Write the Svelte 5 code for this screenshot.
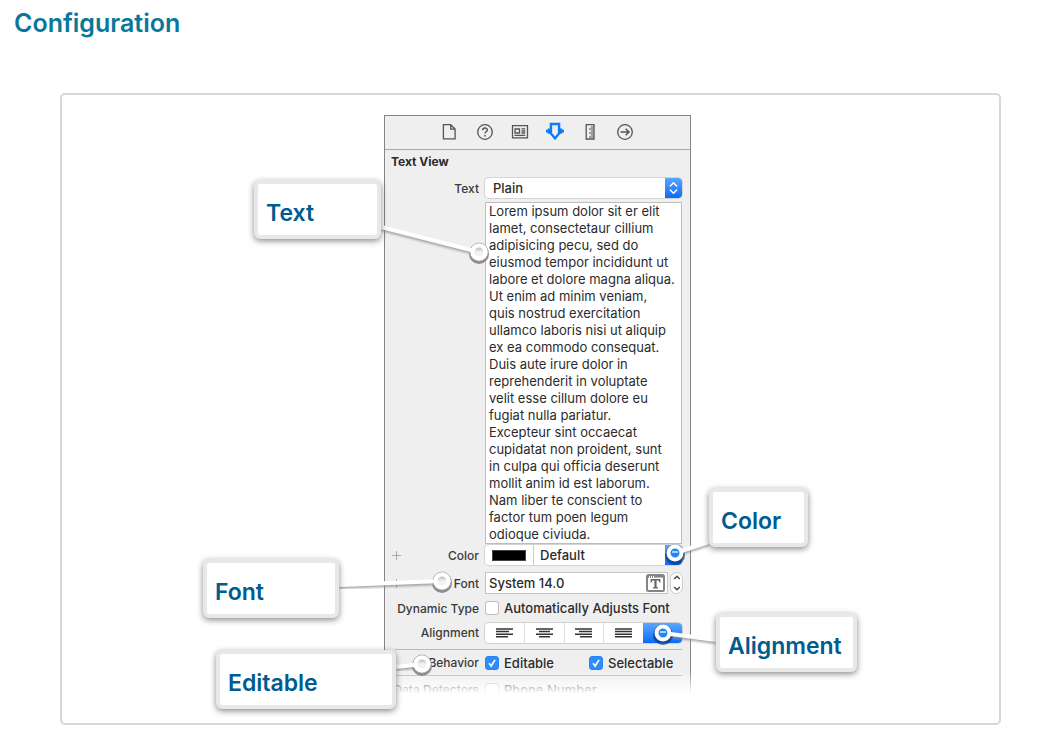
<script>
  const body = [
    'Lorem ipsum dolor sit er elit', 'lamet, consectetaur cillium', 'adipisicing pecu, sed do',
    'eiusmod tempor incididunt ut', 'labore et dolore magna aliqua.', 'Ut enim ad minim veniam,',
    'quis nostrud exercitation', 'ullamco laboris nisi ut aliquip', 'ex ea commodo consequat.',
    'Duis aute irure dolor in', 'reprehenderit in voluptate', 'velit esse cillum dolore eu',
    'fugiat nulla pariatur.', 'Excepteur sint occaecat', 'cupidatat non proident, sunt',
    'in culpa qui officia deserunt', 'mollit anim id est laborum.', 'Nam liber te conscient to',
    'factor tum poen legum', 'odioque civiuda.'
  ].join('\n');

  // Callouts share the coordinates of the stage; each line runs from its card to its pin.
  const callouts = [
    { id: 'text', label: 'Text', x: 51, y: 65, w: 127, from: [178, 112], pin: [276, 137], dark: false },
    { id: 'font', label: 'Font', x: 0, y: 444, w: 136, from: [136, 470], pin: [239, 466], dark: false },
    { id: 'editable', label: 'Editable', x: 13, y: 535, w: 180, from: [193, 552], pin: [219, 549], dark: false },
    { id: 'color', label: 'Color', x: 506, y: 373, w: 99, from: [506, 427], pin: [472, 438], dark: true },
    { id: 'alignment', label: 'Alignment', x: 513, y: 498, w: 141, from: [513, 525], pin: [460, 518], dark: true }
  ];

  const aligns = [
    { name: 'Left', rows: [[0, 17], [0, 13], [0, 17], [0, 12]] },
    { name: 'Center', rows: [[0, 17], [3, 14], [0, 17], [3, 14]] },
    { name: 'Right', rows: [[0, 17], [4, 17], [0, 17], [5, 17]] },
    { name: 'Justified', rows: [[0, 17], [0, 17], [0, 17], [0, 17]] }
  ];
</script>

<main>
  <h2>Configuration</h2>
  <figure>
    <div class="stage">
      <section class="panel" aria-label="Attributes inspector">
        <nav>
          <button aria-label="File"><svg width="18" height="18" viewBox="0 0 18 18"><path d="M2.4 1.7H9.7L14.1 6.1V15.9H2.4ZM9.7 1.7V6.1H14.1" /></svg></button>
          <button aria-label="Help"><svg width="18" height="18" viewBox="0 0 18 18"><circle cx="9" cy="9" r="7.3" /><path class="thick" d="M6.7 7.2C6.7 4.3 11.3 4.3 11.3 7.1C11.3 8.8 9 8.7 9 10.5M9 12V13.6" /></svg></button>
          <button aria-label="Identity"><svg width="18" height="18" viewBox="0 0 18 18"><path d="M1.5 2.7H16.5V14.8H1.5ZM4 6H8.5V10H4ZM10.5 5.8H14.2M10.5 8H14.2M10.5 10H14.2M3.5 12.4H14.2" /></svg></button>
          <button aria-label="Attributes" class="on"><svg width="20" height="20" viewBox="0 0 20 20"><path d="M5.9 2H14.1V11.4L10 16.4L5.9 11.4Z" /><path class="fill" d="M2.8 6.5H6V11.8H2.8V10.5H1V7.8H2.8ZM17.2 6.5H14V11.8H17.2V10.5H19V7.8H17.2Z" /></svg></button>
          <button aria-label="Size"><svg width="18" height="18" viewBox="0 0 18 18"><path d="M5.2 1.7H13V16H5.2Z" /><path class="thin" d="M12.6 4H9.8M12.6 6H8M12.6 8H9.8M12.6 10H8M12.6 12H9.8M12.6 14H8" /></svg></button>
          <button aria-label="Connections"><svg width="18" height="18" viewBox="0 0 18 18"><circle cx="9" cy="9" r="7.3" /><path class="thick" d="M4.5 9H13M9.7 5.8L13 9L9.7 12.2" /></svg></button>
        </nav>

        <h3>Text View</h3>

        <div class="row text">
          <label class="name" for="kind">Text</label>
          <div class="popup">
            <select id="kind"><option>Plain</option></select>
            <span class="cap"><svg width="17" height="20" viewBox="0 0 17 20"><path d="M5.3 8L8.5 4.8L11.7 8M5.3 12L8.5 15.2L11.7 12" /></svg></span>
          </div>
        </div>

        <div class="row area">
          <textarea aria-label="Text content" rows="20" spellcheck="false" value={body}></textarea>
        </div>

        <div class="row color">
          <button class="plus" aria-label="Add color variation"></button>
          <label class="name" for="color">Color</label>
          <div class="popup">
            <button class="swatch" aria-label="Choose color"><span></span></button>
            <select id="color"><option>Default</option></select>
            <span class="cap"></span>
          </div>
        </div>

        <div class="row font">
          <button class="plus" aria-label="Add font variation"></button>
          <label class="name" for="font">Font</label>
          <div class="field">
            <input id="font" type="text" value="System 14.0" />
            <button class="picker" aria-label="Choose font"><svg width="19" height="18" viewBox="0 0 19 18"><path class="frame" d="M2.5 1H16.5Q18 1 18 2.5V15.5Q18 17 16.5 17H2.5Q1 17 1 15.5V2.5Q1 1 2.5 1Z" /><path class="bar" d="M2 3H8" /><path class="top" d="M8 2.6H17" /><path class="tee" d="M4.6 5H14.4V8.4H13.4L12.6 6.5H10.6V13L12 13.5V14.6H7V13.5L8.4 13V6.5H6.4L5.6 8.4H4.6Z" /></svg></button>
          </div>
          <div class="stepper">
            <button aria-label="Increase"><svg width="10" height="10" viewBox="0 0 10 10"><path d="M2.2 6L5 3.3L7.8 6" /></svg></button>
            <button aria-label="Decrease"><svg width="10" height="10" viewBox="0 0 10 10"><path d="M2.2 4L5 6.7L7.8 4" /></svg></button>
          </div>
        </div>

        <div class="row check">
          <span class="name">Dynamic Type</span>
          <label class="tick"><input type="checkbox" />Automatically Adjusts Font</label>
        </div>

        <div class="row align">
          <span class="name">Alignment</span>
          <div class="segments">
            {#each aligns as a}
              <button aria-label={a.name}>
                <svg width="17" height="10" viewBox="0 0 17 10">
                  {#each a.rows as r, i}<path d={`M${r[0]} ${i * 2.6 + 1}H${r[1]}`} />{/each}
                </svg>
              </button>
            {/each}
            <button class="chosen" aria-label="Natural" aria-pressed="true"></button>
          </div>
        </div>

        <div class="row behavior">
          <span class="name">Behavior</span>
          <div class="pair">
            <label class="tick"><input type="checkbox" checked />Editable</label>
            <label class="tick"><input type="checkbox" checked />Selectable</label>
          </div>
        </div>

        <div class="row data">
          <span class="name">Data Detectors</span>
          <label class="tick"><input type="checkbox" />Phone Number</label>
        </div>
      </section>

      <svg class="lines" viewBox="0 0 655 600" aria-hidden="true">
        <defs>
          <filter id="soft" x="-50%" y="-50%" width="200%" height="200%"><feGaussianBlur stdDeviation="1.2" /></filter>
          <linearGradient id="well" x1="0" y1="0" x2="0" y2="1"><stop offset="0.2" stop-color="#c4c4c4" /><stop offset="0.5" stop-color="#f2f2f2" /></linearGradient>
        </defs>
        {#each callouts as c}
          <path class="shade" filter="url(#soft)" d={`M${c.from[0]} ${c.from[1] + 2}L${c.pin[0]} ${c.pin[1] + 2}`} />
          <circle class="drop" class:dark={c.dark} cx={c.pin[0]} cy={c.pin[1] + 2} r="10" />
          <circle class="rim" class:dark={c.dark} cx={c.pin[0]} cy={c.pin[1]} r="9" />
          <path class="lead" d={`M${c.from[0]} ${c.from[1]}L${c.pin[0]} ${c.pin[1]}`} />
          <circle class="ring" class:dark={c.dark} cx={c.pin[0]} cy={c.pin[1]} r="6.5" />
          {#if c.dark}
            <path class="glint" d={`M${c.pin[0] - 3} ${c.pin[1] - 1}h6`} />
          {/if}
        {/each}
      </svg>

      {#each callouts as c}
        <a class="callout" href={`#${c.id}`} style={`left:${c.x}px;top:${c.y}px;width:${c.w}px`}>{c.label}</a>
      {/each}
    </div>
  </figure>
</main>

<style>
  :global(body) { background: #fff; }
  * { box-sizing: border-box; }
  main { padding: 7px 55px 16px 14px; font-family: Inter, 'Liberation Sans', sans-serif; }
  h2 { margin: 0; font-size: 25px; line-height: 32px; font-weight: 600; color: #07779b; }
  figure { margin: 54px 0 0 46px; padding: 20px 0 8px; border: 2px solid #d8d8d8; border-radius: 5px; }
  .stage { position: relative; width: 655px; margin: 0 auto; padding: 0 0 12px 181px; }

  .panel { position: relative; width: 307px; border: 1px solid #858585; border-bottom: 0; background: #efefef; color: #2b2b2b; font-size: 13px; }
  .panel::after { content: ''; position: absolute; inset: auto -1px 0; height: 32px; background: linear-gradient(#fff0, #fff 70%); pointer-events: none; }
  button, select, input, textarea { font: inherit; color: inherit; }
  button { border: 0; padding: 0; background: none; display: flex; align-items: center; justify-content: center; }
  svg { fill: none; display: block; }

  nav { display: flex; justify-content: center; gap: 11px; height: 34px; padding-bottom: 1px; border-bottom: 1px solid #a9a9a9; }
  nav button { width: 24px; stroke: #555; stroke-width: 1.3; }
  nav .thick { stroke-width: 1.5; }
  nav .thin { stroke-width: 1; }
  nav .on { stroke: #0b7bff; stroke-width: 2.4; }
  nav .fill { fill: #0b7bff; stroke: none; }
  h3 { margin: 0; padding-left: 6px; font-size: 12px; line-height: 24px; font-weight: 700; }

  .row { position: relative; display: flex; align-items: center; gap: 6px; padding: 0 8px 0 6px; }
  .name { width: 88px; flex: none; text-align: right; font-size: 12px; font-weight: 500; white-space: nowrap; color: #3a3a3a; }
  .text { height: 28px; }
  .area { padding-left: 100px; }
  .color { height: 22px; }
  .font { height: 34px; }
  .check { height: 16px; }
  .align { height: 33px; }
  .behavior { height: 27px; }
  .data { height: 27px; }
  .behavior::before, .behavior::after { content: ''; position: absolute; left: 10px; right: 8px; height: 1px; background: #bbb; }
  .behavior::before { top: 0; }
  .behavior::after { bottom: 0; }

  .popup { position: relative; flex: 1; display: flex; height: 20px; background: #fff; border-radius: 4px; overflow: hidden; box-shadow: 0 0 0 1px #d4d4d4; font-weight: 500; }
  .popup select { flex: 1; min-width: 0; appearance: none; border: 0; background: none; padding: 0 24px 0 8px; outline: 0; }
  #color { padding-left: 6px; }
  .cap { position: absolute; top: 0; right: 0; width: 17px; height: 20px; background: linear-gradient(#5aa7fb, #0a6cf8); pointer-events: none; }
  .cap path { stroke: #fff; stroke-width: 1.5; stroke-linecap: round; stroke-linejoin: round; }
  .swatch { width: 49px; border-right: 1px solid #ccc; }
  .swatch span { width: 34px; height: 11px; background: #000; border: 1px solid #444; }

  textarea { width: 100%; height: 342px; margin: 0; padding: 0 3px; border: 1px solid #bdbdbd; background: #fff; resize: none; outline: 0; overflow: hidden; line-height: 17px; white-space: pre; display: block; }

  .plus { position: absolute; left: 7px; width: 9px; height: 9px; background: linear-gradient(#aaa, #aaa) center / 9px 1px no-repeat, linear-gradient(#aaa, #aaa) center / 1px 9px no-repeat; }
  .field { flex: 1; min-width: 0; display: flex; align-items: center; height: 22px; padding: 0 2px 0 3px; background: #fff; border: 1px solid #c4c4c4; }
  .field input { flex: 1; min-width: 0; padding: 0; border: 0; outline: 0; background: none; font-weight: 500; }
  .picker { flex: none; }
  .picker .frame, .picker .bar, .picker .top { stroke: #858585; stroke-width: 2; }
  .picker .bar { stroke-dasharray: 1 1; }
  .picker .tee { fill: #666; }
  .stepper { flex: none; width: 11px; height: 20px; margin-left: -3px; border-radius: 6px; background: #fff; box-shadow: 0 0 0 1px #ccc; display: flex; flex-direction: column; align-items: center; justify-content: center; }
  .stepper button { height: 10px; }
  .stepper path { stroke: #444; stroke-width: 1.4; }

  .tick { display: flex; align-items: center; gap: 5px; font-weight: 500; white-space: nowrap; }
  .tick input { appearance: none; flex: none; width: 14px; height: 14px; margin: 0; border: 1px solid #bdbdbd; border-radius: 3px; background: #fff; }
  .tick input:checked { border-color: #2584f7; background: #2f8cfb url("data:image/svg+xml,%3Csvg xmlns='http://www.w3.org/2000/svg' viewBox='0 0 12 12'%3E%3Cpath d='M3 6.2L5.2 9L9 2.8' fill='none' stroke='white' stroke-width='1.6'/%3E%3C/svg%3E") center / 12px no-repeat; }
  .pair { flex: 1; display: grid; grid-template-columns: 104px 1fr; }

  .segments { flex: 1; display: grid; grid-template-columns: repeat(5, 1fr); height: 20px; background: #fff; border-radius: 4px; overflow: hidden; box-shadow: 0 0 0 1px #d0d0d0; }
  .segments button + button { border-left: 1px solid #ddd; }
  .segments path { stroke: #333; stroke-width: 1.5; }
  .segments button.chosen { background: linear-gradient(#5aa7fb, #0a6cf8); border: 0; }

  .lines { position: absolute; top: 0; left: 0; width: 655px; height: 600px; pointer-events: none; }
  .lead { stroke: #fff; stroke-width: 4; }
  .shade { stroke: #888; stroke-width: 4; opacity: 0.7; }
  .drop { fill: #8c8c8c; }
  .drop.dark { fill: #0b3d86; opacity: 0.75; }
  .rim { fill: #fff; stroke: #aaa; }
  .rim.dark { stroke: none; fill: #17498e; opacity: 0.4; }
  .ring { fill: url(#well); stroke: #fff; stroke-width: 4; }
  .ring.dark { fill: #2385f5; }
  .glint { stroke: #a7d0ff; stroke-width: 2; }
  .callout { position: absolute; height: 59px; padding: 5px 0 0 8px; border: 4px solid #e8e8e8; border-radius: 6px; background: #fff; box-shadow: 0 2px 6px #0007; color: #005b8f; font-size: 23px; line-height: 48px; font-weight: 600; text-decoration: none; white-space: nowrap; }
</style>
